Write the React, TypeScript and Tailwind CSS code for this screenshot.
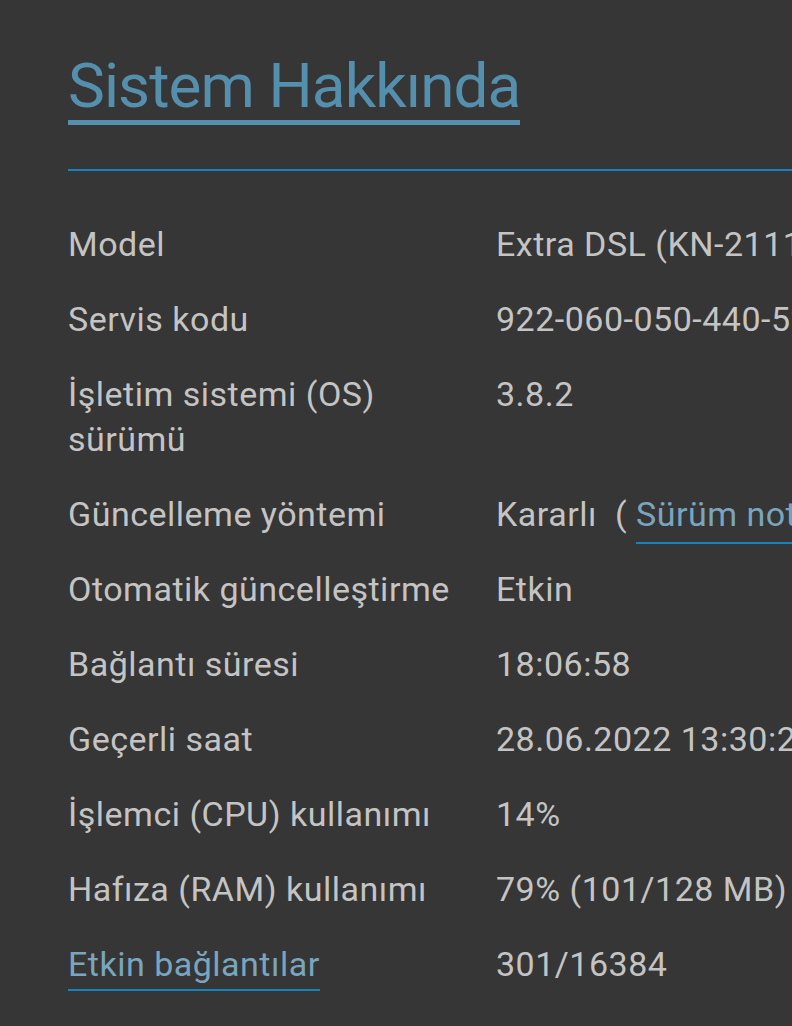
const rows: { label: React.ReactNode; value: React.ReactNode }[] = [
  { label: "Model", value: "Extra DSL (KN-2111)" },
  { label: "Servis kodu", value: "922-060-050-440-52" },
  { label: "İşletim sistemi (OS) sürümü", value: "3.8.2" },
  {
    label: "Güncelleme yöntemi",
    value: (
      <span>
        Kararlı<span className="ml-[18px]">(</span>{" "}
        <a className="border-b-2 border-[#1484bf] pb-[8px] text-[#79a6be]">Sürüm notları</a> )
      </span>
    ),
  },
  { label: "Otomatik güncelleştirme", value: "Etkin" },
  { label: "Bağlantı süresi", value: "18:06:58" },
  { label: "Geçerli saat", value: "28.06.2022 13:30:24" },
  { label: "İşlemci (CPU) kullanımı", value: "14%" },
  { label: "Hafıza (RAM) kullanımı", value: "79% (101/128 MB)" },
  {
    label: <a className="border-b-2 border-[#1484bf] pb-[5px] text-[#79a6be]">Etkin bağlantılar</a>,
    value: "301/16384",
  },
];

export default function App() {
  return (
    <div className="h-[1026px] w-[792px] overflow-hidden bg-[#363636] font-['Roboto',sans-serif]">
      <div className="w-[1100px] pl-[68px] pt-[55px]">
        <h1 className="inline-block border-b-[5px] border-[#558fae] pb-[3px] text-[62px] leading-[62px] tracking-[-0.9px] text-[#558fae]">
          Sistem Hakkında
        </h1>
        <div className="mt-[44px] h-[2px] bg-[#1484bf]" />
        <div className="mt-[51px] grid grid-cols-[428px_auto] text-[34px] leading-[45px] tracking-[0.5px] text-[#c4c4c4]">
          {rows.map((r, i) => (
            <div key={i} className="contents">
              <div className="w-[400px] pb-[30px]">{r.label}</div>
              <div className="whitespace-nowrap pb-[30px]">{r.value}</div>
            </div>
          ))}
        </div>
      </div>
    </div>
  );
}
